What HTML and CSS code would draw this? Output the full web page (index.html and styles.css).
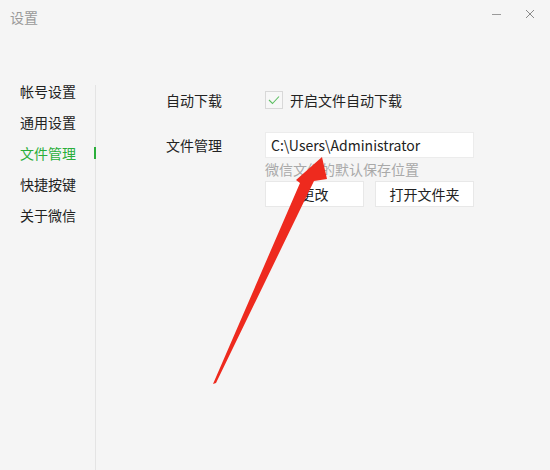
FILE: index.html
```html
<!DOCTYPE html>
<html lang="zh">
<head>
<meta charset="utf-8">
<link rel="stylesheet" href="styles.css">
</head>
<body>
<div class="window">
  <div class="titlebar">
    <span class="title">设置</span>
    <div class="controls">
      <span class="ctl min"></span>
      <span class="ctl close">
        <svg width="10" height="10" viewBox="0 0 10 10"><path d="M1 1L9 9M9 1L1 9" stroke="#8a8a8a" stroke-width="1" fill="none"/></svg>
      </span>
    </div>
  </div>
  <div class="main">
    <nav class="sidebar">
      <div class="item">帐号设置</div>
      <div class="item">通用设置</div>
      <div class="item active">文件管理</div>
      <div class="item">快捷按键</div>
      <div class="item">关于微信</div>
    </nav>
    <section class="content">
      <div class="row">
        <div class="label">自动下载</div>
        <div class="check-field">
          <span class="checkbox">
            <svg width="12" height="10" viewBox="0 0 12 10"><path d="M1 5L4.5 8.5L11 1.5" stroke="#5cbf62" stroke-width="1.1" fill="none"/></svg>
          </span>
          <span class="check-label">开启文件自动下载</span>
        </div>
      </div>
      <div class="row row-file">
        <div class="label">文件管理</div>
        <div class="field">
          <div class="input">C:\Users\Administrator</div>
          <div class="hint">微信文件的默认保存位置</div>
          <div class="buttons">
            <button class="btn">更改</button>
            <button class="btn">打开文件夹</button>
          </div>
        </div>
      </div>
    </section>
  </div>
  <svg class="arrow" width="550" height="470" viewBox="0 0 550 470">
    <polygon points="322,157 327,179 314,181 216,383 213,384 300,183 296,180" fill="#ee2a1e"/>
  </svg>
</div>
</body>
</html>
```
FILE: styles.css
```css
* { box-sizing: border-box; }
html, body { margin: 0; padding: 0; }
body {
  width: 550px;
  height: 470px;
  background: #f5f5f5;
  font-family: "Noto Sans CJK SC", "Microsoft YaHei", sans-serif;
  color: #333;
  overflow: hidden;
}
.window {
  position: relative;
  width: 550px;
  height: 470px;
  display: flex;
  flex-direction: column;
}
.titlebar {
  height: 36px;
  display: flex;
  justify-content: space-between;
  align-items: flex-start;
  padding: 6px 0 0 10px;
}
.title {
  font-size: 14px;
  color: #9a9a9a;
  line-height: 22px;
}
.controls {
  display: flex;
  align-items: center;
  gap: 22px;
  padding-right: 14px;
  padding-top: 2px;
}
.ctl { display: flex; align-items: center; justify-content: center; width: 12px; height: 12px; }
.min::before { content: ""; display: block; width: 9px; height: 1px; background: #9a9a9a; }
.main {
  flex: 1;
  display: flex;
  padding-top: 49px;
}
.sidebar {
  width: 96px;
  border-right: 1px solid #e4e4e4;
  display: flex;
  flex-direction: column;
}
.item {
  position: relative;
  height: 31px;
  line-height: 31px;
  margin-top: -9px;
  margin-bottom: 9px;
  padding-left: 20px;
  font-size: 14px;
  color: #222;
}
.item.active { color: #2aae3a; }
.item.active::after {
  content: "";
  position: absolute;
  right: -1px;
  top: 9px;
  width: 2px;
  height: 12px;
  background: #2aae3a;
}
.content {
  padding: 6px 0 0 70px;
  display: flex;
  flex-direction: column;
  gap: 23px;
}
.row { display: flex; align-items: flex-start; }
.label {
  width: 99px;
  font-size: 14px;
  line-height: 18px;
  color: #222;
}
.check-field { display: flex; flex-direction: row; align-items: center; gap: 7px; }
.checkbox {
  width: 18px;
  height: 18px;
  border: 1px solid #d8d8d8;
  background: #f7f7f7;
  display: flex;
  align-items: center;
  justify-content: center;
}
.check-label { font-size: 14px; line-height: 18px; color: #222; }
.row-file .label { margin-top: 4px; }
.field { display: flex; flex-direction: column; }
.input {
  width: 209px;
  height: 26px;
  background: #fff;
  border: 1px solid #ececec;
  padding-left: 5px;
  font-size: 14px;
  line-height: 24px;
  color: #222;
}
.hint {
  font-size: 14px;
  color: #a9a9a9;
  line-height: 22px;
}
.buttons { display: flex; gap: 11px; margin-top: 1px; }
.btn {
  width: 99px;
  height: 26px;
  background: #fff;
  border: 1px solid #e8e8e8;
  font-family: inherit;
  font-size: 14px;
  color: #222;
  padding: 0;
}
.arrow {
  position: absolute;
  left: 0;
  top: 0;
  pointer-events: none;
}
```
